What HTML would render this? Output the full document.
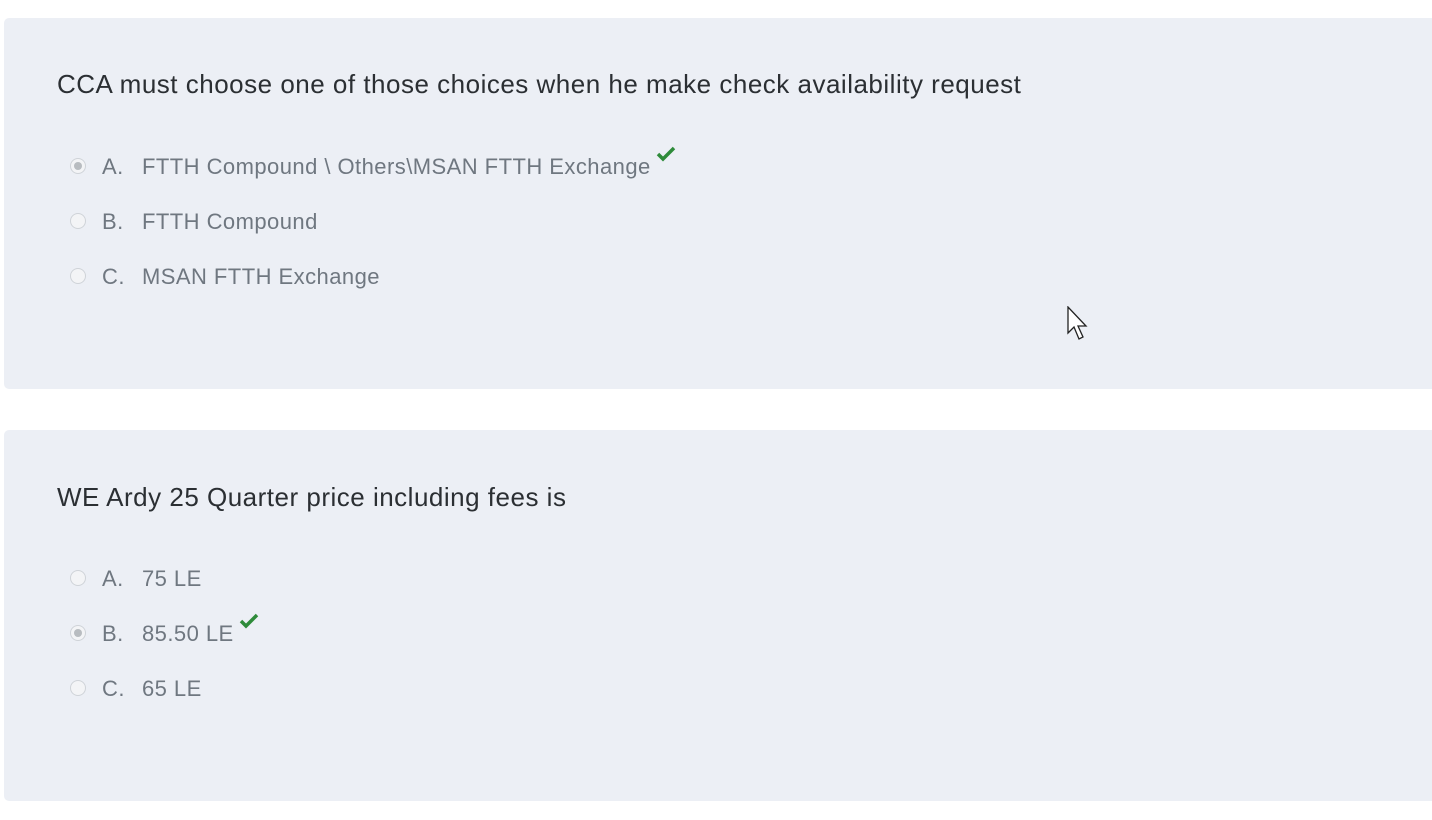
<!DOCTYPE html>
<html><head><style>
body{margin:0;background:#fff;font-family:"Liberation Sans",sans-serif;width:1432px;height:820px;overflow:hidden;position:relative}
.card{position:absolute;left:4px;width:1440px;background:#eceff5;border-radius:5px}
.q{position:absolute;left:53px;font-size:26px;letter-spacing:0.5px;color:#2b2f33;white-space:nowrap}
.opt{position:absolute;left:66px;font-size:22px;letter-spacing:0.45px;color:#6f7780;white-space:nowrap;height:24px;line-height:24px}
.r{position:absolute;left:0;top:3px;width:16px;height:16px;border:1px solid #cfd3d8;border-radius:50%;background:#f3f4f6;box-sizing:border-box}
.r.on::after{content:"";position:absolute;left:3px;top:3px;width:8px;height:8px;border-radius:50%;background:#b8bcc0}
.l{position:absolute;left:32px}
.t{position:absolute;left:72px}
.ck{display:inline-block;vertical-align:top;margin-left:5px;margin-top:-9px}
</style></head><body>
<div class="card" style="top:18px;height:371px">
<div class="q" style="top:51px">CCA must choose one of those choices when he make check availability request</div>
<div class="opt" style="top:137px"><span class="r on"></span><span class="l">A.</span><span class="t">FTTH Compound \ Others\MSAN FTTH Exchange<svg class="ck" width="20" height="16" viewBox="0 0 20 16"><path d="M2 8 L7 13 L18 2" stroke="#2e8b3a" stroke-width="3.5" fill="none"/></svg></span></div>
<div class="opt" style="top:192px"><span class="r"></span><span class="l">B.</span><span class="t">FTTH Compound</span></div>
<div class="opt" style="top:247px"><span class="r"></span><span class="l">C.</span><span class="t">MSAN FTTH Exchange</span></div>
</div>
<svg style="position:absolute;left:1067px;top:306px" width="24" height="36" viewBox="0 0 24 36"><path d="M1 1 L1 27 L7 21 L12 33 L16 31 L11 20 L19 20 Z" fill="#fff" stroke="#222" stroke-width="1.3"/></svg>
<div class="card" style="top:430px;height:371px">
<div class="q" style="top:52px">WE Ardy 25 Quarter price including fees is</div>
<div class="opt" style="top:137px"><span class="r"></span><span class="l">A.</span><span class="t">75 LE</span></div>
<div class="opt" style="top:192px"><span class="r on"></span><span class="l">B.</span><span class="t">85.50 LE<svg class="ck" width="20" height="16" viewBox="0 0 20 16"><path d="M2 8 L7 13 L18 2" stroke="#2e8b3a" stroke-width="3.5" fill="none"/></svg></span></div>
<div class="opt" style="top:247px"><span class="r"></span><span class="l">C.</span><span class="t">65 LE</span></div>
</div>
</body></html>
